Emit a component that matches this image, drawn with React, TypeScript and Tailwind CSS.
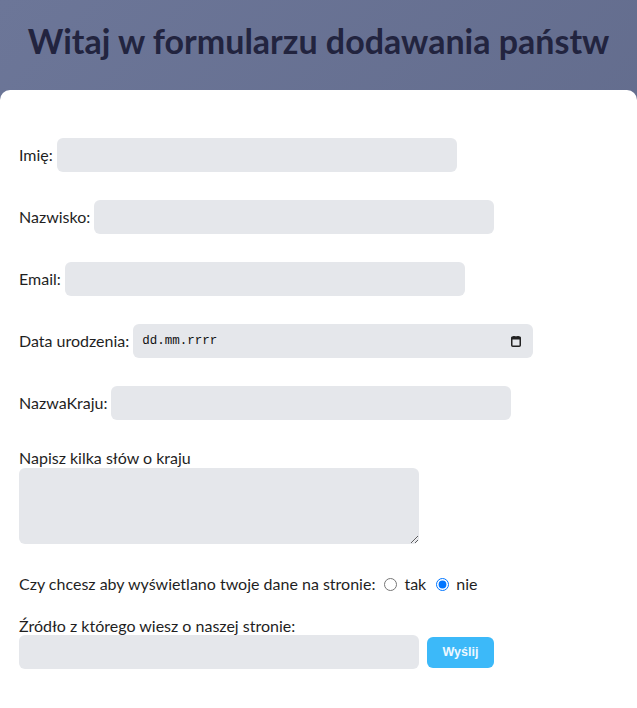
const field =
  "h-[34px] w-[400px] rounded-md bg-[#e5e7eb] px-2 outline-none";

function Row({ label, children }: { label: string; children: React.ReactNode }) {
  return (
    <div className="flex items-center gap-[4px]">
      <span>{label}</span>
      {children}
    </div>
  );
}

export default function App() {
  return (
    <div className="min-h-[708px] bg-[linear-gradient(135deg,#6c7698_0%,#5d6686_100%)] font-['Lato',sans-serif] text-[#1f1f1f]">
      {/* naglowek */}
      <header className="flex h-[90px] items-center justify-center pb-[9px]">
        <h1 className="text-[34px] font-bold text-[#22243f]">
          Witaj w formularzu dodawania państw
        </h1>
      </header>

      {/* formularz */}
      <form className="min-h-[618px] rounded-t-[10px] bg-white px-[19px] pt-[48px] text-base">
        <div className="flex flex-col gap-[28px]">
          <Row label="Imię:">
            <input className={field} />
          </Row>
          <Row label="Nazwisko:">
            <input className={field} />
          </Row>
          <Row label="Email:">
            <input className={field} />
          </Row>
          <Row label="Data urodzenia:">
            <div className="relative">
              <input
                className={field + " pl-[9px] font-['Liberation_Mono',monospace] text-[12.5px] text-[#111]"}
                defaultValue="dd.mm.rrrr"
              />
              <svg
                className="absolute right-[12px] top-[12px]"
                width="10"
                height="11"
                viewBox="0 0 10 11"
              >
                <rect x="0.75" y="1" width="8.5" height="9.25" rx="1" fill="none" stroke="#222" strokeWidth="1.5" />
                <rect x="0.5" y="1" width="9" height="2.5" fill="#222" />
                <rect x="2.25" y="0" width="1.5" height="2" fill="#222" />
                <rect x="6.25" y="0" width="1.5" height="2" fill="#222" />
              </svg>
            </div>
          </Row>
          <Row label="NazwaKraju:">
            <input className={field} />
          </Row>
        </div>

        <div className="mt-[28px]">
          <div className="leading-[20px]">Napisz kilka słów o kraju</div>
          <textarea className="block h-[76px] w-[400px] resize-y rounded-md bg-[#e5e7eb] p-2 outline-none" />
        </div>

        <div className="mt-[30px] flex items-center leading-5">
          <span>Czy chcesz aby wyświetlano twoje dane na stronie:</span>
          <input type="radio" name="pokaz" className="ml-[9px] h-[13px] w-[13px]" />
          <span className="ml-[7px]">tak</span>
          <input type="radio" name="pokaz" defaultChecked className="ml-[10px] h-[13px] w-[13px]" />
          <span className="ml-[7px]">nie</span>
        </div>

        <div className="mt-[22px]">
          <div className="leading-[19px]">Źródło z którego wiesz o naszej stronie:</div>
          <div className="flex items-center gap-[8px]">
            <input className={field} />
            <button
              type="button"
              className="h-[31px] w-[67px] rounded-md bg-[#3cb9f9] font-['Liberation_Sans',sans-serif] text-[12.5px] font-bold text-[#eef8ff]"
            >
              Wyślij
            </button>
          </div>
        </div>
      </form>
    </div>
  );
}
